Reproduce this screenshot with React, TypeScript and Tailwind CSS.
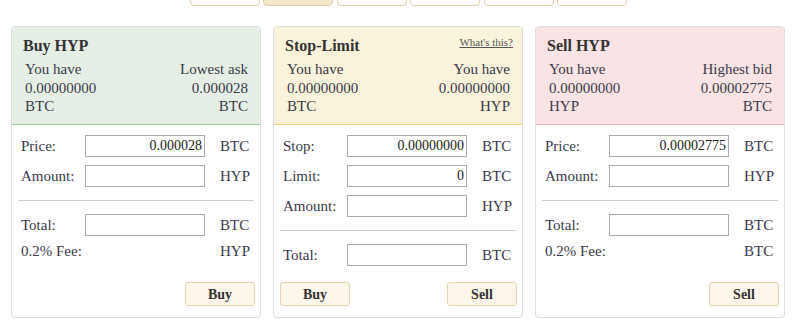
const font = "font-['Liberation_Serif',serif]";

interface Row {
  label: string;
  value?: string;
  unit: string;
  input: boolean;
}

interface PanelProps {
  title: string;
  headBg: string;
  headBorder: string;
  left: string[];
  right: string[];
  top: Row[];
  bottom: Row[];
  buttons: "buy" | "sell" | "both";
  help?: boolean;
}

function FieldRow({ row }: { row: Row }) {
  return (
    <div className="flex items-center h-[22px]">
      <div className="w-[64px] shrink-0">{row.label}</div>
      {row.input ? (
        <div className="w-[120px] h-[22px] border border-[#aaa] bg-white text-right pr-[2px] text-[14px] leading-[20px] text-[#222]">
          {row.value}
        </div>
      ) : (
        <div className="w-[120px]"></div>
      )}
      <div className="ml-[15px]">{row.unit}</div>
    </div>
  );
}

function Btn({ label }: { label: string }) {
  return (
    <div className="w-[70px] h-[24px] rounded-[3px] border border-[#e6d4ae] bg-[#fdf6ea] flex items-center justify-center font-bold text-[14px] text-[#333]">
      {label}
    </div>
  );
}

function Panel(props: PanelProps) {
  return (
    <div className="w-[250px] h-[292px] rounded-[4px] border border-[#ddd] flex flex-col overflow-hidden bg-white">
      <div className={`${props.headBg} border-b ${props.headBorder} pl-[11px] pr-[12px] pt-[9px] h-[98px] relative`}>
        <div className="text-[16px] font-bold leading-[20px] text-[#333]">{props.title}</div>
        {props.help ? (
          <div className="absolute right-[9px] top-[7px] text-[11px] underline text-[#555]">What's this?</div>
        ) : null}
        <div className="flex justify-between pl-[2px] text-[15px] leading-[18.5px] mt-[4px] text-[#3a3a4a]">
          <div>
            {props.left.map((t, i) => (
              <div key={i}>{t}</div>
            ))}
          </div>
          <div className="text-right">
            {props.right.map((t, i) => (
              <div key={i}>{t}</div>
            ))}
          </div>
        </div>
      </div>
      <div className="flex-1 flex flex-col text-[15px] text-[#3a3a4a] pt-[10px]">
        <div className="flex flex-col gap-[8px] pl-[9px]">
          {props.top.map((r, i) => (
            <FieldRow key={i} row={r} />
          ))}
        </div>
        <div className="mx-[6px] mt-[13px] border-t border-[#ccc]"></div>
        <div className="flex flex-col gap-[4px] pl-[9px] mt-[13px]">
          {props.bottom.map((r, i) => (
            <FieldRow key={i} row={r} />
          ))}
        </div>
        <div className={`mt-auto mb-[11px] flex pl-[6px] pr-[5px] ${props.buttons === "both" ? "justify-between" : "justify-end"}`}>
          {props.buttons !== "sell" ? <Btn label="Buy" /> : null}
          {props.buttons !== "buy" ? <Btn label="Sell" /> : null}
        </div>
      </div>
    </div>
  );
}

export default function App() {
  return (
    <div className={`w-[798px] h-[332px] bg-white overflow-hidden ${font}`}>
      <div className="flex gap-[3.4px] pl-[190px] -mt-[22px] h-[28px]">
        {[0, 1, 2, 3, 4, 5].map((i) => (
          <div
            key={i}
            className={`w-[70px] h-[28px] rounded-[4px] border border-[#e2cfa9] ${i === 1 ? "bg-[#f2e5c8]" : "bg-white"}`}
          ></div>
        ))}
      </div>
      <div className="flex gap-[12px] pl-[11px] mt-[20px]">
        <Panel
          title="Buy HYP"
          headBg="bg-[#e5efe5]"
          headBorder="border-[#9fd09f]"
          left={["You have", "0.00000000", "BTC"]}
          right={["Lowest ask", "0.000028", "BTC"]}
          top={[
            { label: "Price:", value: "0.000028", unit: "BTC", input: true },
            { label: "Amount:", unit: "HYP", input: true },
          ]}
          bottom={[
            { label: "Total:", unit: "BTC", input: true },
            { label: "0.2% Fee:", unit: "HYP", input: false },
          ]}
          buttons="buy"
        />
        <Panel
          title="Stop-Limit"
          headBg="bg-[#faf3dc]"
          headBorder="border-[#e8d57c]"
          left={["You have", "0.00000000", "BTC"]}
          right={["You have", "0.00000000", "HYP"]}
          top={[
            { label: "Stop:", value: "0.00000000", unit: "BTC", input: true },
            { label: "Limit:", value: "0", unit: "BTC", input: true },
            { label: "Amount:", unit: "HYP", input: true },
          ]}
          bottom={[{ label: "Total:", unit: "BTC", input: true }]}
          buttons="both"
          help
        />
        <Panel
          title="Sell HYP"
          headBg="bg-[#f9e3e4]"
          headBorder="border-[#eeb9bb]"
          left={["You have", "0.00000000", "HYP"]}
          right={["Highest bid", "0.00002775", "BTC"]}
          top={[
            { label: "Price:", value: "0.00002775", unit: "BTC", input: true },
            { label: "Amount:", unit: "HYP", input: true },
          ]}
          bottom={[
            { label: "Total:", unit: "BTC", input: true },
            { label: "0.2% Fee:", unit: "BTC", input: false },
          ]}
          buttons="sell"
        />
      </div>
    </div>
  );
}
